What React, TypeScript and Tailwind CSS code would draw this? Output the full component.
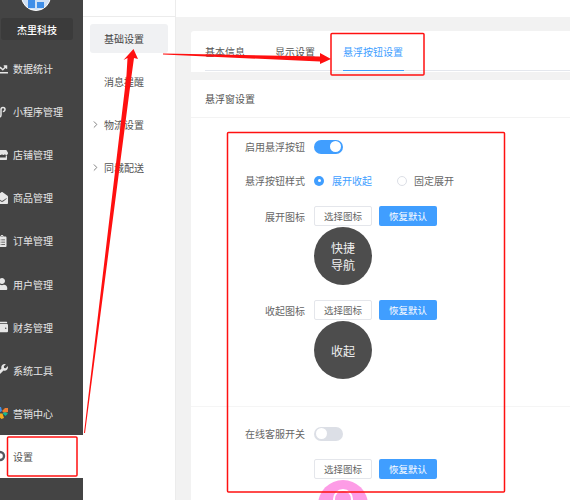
import type { ReactNode } from 'react';
import { FaChartLine, FaClipboardList, FaEnvelopeOpen, FaStore, FaUser, FaWallet, FaWrench } from 'react-icons/fa';
import { LuChevronRight } from 'react-icons/lu';

const FONT = 'font-["Noto_Sans_CJK_SC","Liberation_Sans",sans-serif]';

function MiniAppIcon() {
  return (
    <svg viewBox="0 0 12 12" className="h-3 w-3" fill="none" stroke="currentColor" strokeWidth="1.5">
      <path d="M1 7.5v1.5a2 2 0 0 0 4 0V3.5a2 2 0 0 1 4 0a2 2 0 0 1-2.2 2" />
    </svg>
  );
}

function MarketingIcon() {
  return (
    <svg viewBox="0 0 12 12" className="h-3 w-3">
      <path d="M0 0h5l1 4-3 2z" fill="#3f8ee8" />
      <path d="M12 1v4L8 6 6 4l3-3z" fill="#ee7d31" />
      <path d="M6.5 6.5 9 5l3 1.5L9.5 9z" fill="#17b890" />
      <path d="M3 6.5h3.5L8 11l-2.5 1L3 10z" fill="#f5ac1c" />
    </svg>
  );
}

function GearIcon() {
  return (
    <svg viewBox="0 0 12 12" className="h-3 w-3">
      <circle cx="6" cy="6" r="4" fill="none" stroke="#55585e" strokeWidth="2.4" />
    </svg>
  );
}

const MENU: Array<{ label: string; icon: ReactNode }> = [
  { label: '数据统计', icon: <FaChartLine size={12} /> },
  { label: '小程序管理', icon: <MiniAppIcon /> },
  { label: '店铺管理', icon: <FaStore size={12} /> },
  { label: '商品管理', icon: <FaEnvelopeOpen size={12} /> },
  { label: '订单管理', icon: <FaClipboardList size={12} /> },
  { label: '用户管理', icon: <FaUser size={12} /> },
  { label: '财务管理', icon: <FaWallet size={12} /> },
  { label: '系统工具', icon: <FaWrench size={12} /> },
  { label: '营销中心', icon: <MarketingIcon /> },
];

const SUB_MENU = [
  { label: '消息提醒', arrow: false },
  { label: '物流设置', arrow: true },
  { label: '同城配送', arrow: true },
];

function Sidebar() {
  return (
    <aside className="flex w-[83px] shrink-0 flex-col bg-[#444444]">
      <div className="h-[18px] overflow-hidden">
        <div className="-mt-[19px] ml-[21px] flex h-[30px] w-[30px] items-end justify-center gap-[2px] rounded-full border border-white bg-[#cfe0f5] pb-[2px]">
          <div className="h-[9px] w-[7px] bg-[#3f8ee8]" />
          <div className="h-[6px] w-[7px] bg-[#3f8ee8]" />
        </div>
      </div>
      <div className="ml-[1px] flex h-[22px] w-[72px] items-center justify-center rounded-[3px] bg-[#3b3b3b] text-[10px] font-medium text-white">
        杰里科技
      </div>
      <nav className="mt-[7px] flex flex-col">
        {MENU.map((item) => (
          <div key={item.label} className="flex h-[43.1px] items-center text-[10px] text-[#e6e6e6]">
            <span className="-ml-[4px] mr-[5px] flex w-[12px] justify-center">{item.icon}</span>
            {item.label}
          </div>
        ))}
        <div className="flex h-[43px] items-center bg-white text-[10px] text-[#555555]">
          <span className="-ml-[6px] mr-[7px] flex w-[12px] justify-center">
            <GearIcon />
          </span>
          设置
        </div>
      </nav>
    </aside>
  );
}

function SubMenu() {
  return (
    <div className="w-[93px] shrink-0 border-r border-[#ececec] bg-white">
      <div className="h-[17px] border-b border-[#ececec]" />
      <div className="mx-[7px] mt-[7px] flex h-[29px] items-center rounded-[3px] bg-[#f0f1f3] pl-[14px] text-[10px] text-[#444444]">
        基础设置
      </div>
      <div className="flex flex-col pt-[7px]">
        {SUB_MENU.map((item) => (
          <div key={item.label} className="relative flex h-[43px] items-center pl-[21px] text-[10px] text-[#555555]">
            {item.arrow && <LuChevronRight size={11} className="absolute left-[7px] text-[#777777]" />}
            {item.label}
          </div>
        ))}
      </div>
    </div>
  );
}

function Switch({ on }: { on: boolean }) {
  return (
    <div
      className={`flex h-[14px] w-[29px] items-center rounded-full px-[2px] ${
        on ? 'justify-end bg-[#409eff]' : 'justify-start bg-[#dcdfe6]'
      }`}
    >
      <div className="h-[11px] w-[11px] rounded-full bg-white" />
    </div>
  );
}

function Field({ label, children }: { label?: string; children: ReactNode }) {
  return (
    <div className="flex items-center">
      <div className="w-[123px] shrink-0 pr-[9px] text-right text-[10px] text-[#666666]">{label}</div>
      {children}
    </div>
  );
}

function IconButtons({ label }: { label?: string }) {
  return (
    <Field label={label}>
      <div className="flex gap-[7px]">
        <div className="flex h-[20px] w-[58px] items-center justify-center rounded-[2px] border border-[#e4e6eb] bg-white text-[9.5px] text-[#666666]">
          选择图标
        </div>
        <div className="flex h-[20px] w-[58px] items-center justify-center rounded-[2px] bg-[#409eff] text-[9.5px] text-white">
          恢复默认
        </div>
      </div>
    </Field>
  );
}

function Bubble({ lines }: { lines: string[] }) {
  return (
    <div className="ml-[123px] flex h-[58px] w-[58px] flex-col items-center justify-center rounded-full bg-[#4d4d4d] text-[12px] leading-[17px] text-[#f0f0f0]">
      {lines.map((line) => (
        <span key={line}>{line}</span>
      ))}
    </div>
  );
}

function Annotations() {
  return (
    <svg viewBox="0 0 570 500" className="pointer-events-none absolute inset-0 h-[500px] w-[570px]">
      <g fill="none" stroke="#ff1010" strokeWidth="1.5">
        <rect x="7.5" y="437" width="69.5" height="39" rx="1" />
        <rect x="331" y="33.5" width="93" height="41.5" rx="1" />
        <rect x="227.5" y="132.5" width="277" height="359.5" rx="1" />
      </g>
      <path d="M84 433 L126.5 75 L127.5 58 L123.5 60 L133.5 49 L138 59 L134 58 L131.5 76 L85 433 Z" fill="#ff1010" />
      <path d="M163 53.5 L320 56.5 L320 53 L331 59 L320 64 L320 61.5 L163 54.5 Z" fill="#ff1010" />
    </svg>
  );
}

export default function App() {
  return (
    <div className={`relative flex h-[500px] w-[570px] overflow-hidden bg-[#f2f2f2] ${FONT}`}>
      <Sidebar />
      <SubMenu />
      <main className="min-w-0 flex-1">
        <div className="h-[17px] bg-white" />
        <div className="ml-[15px] mt-[14px] h-[41px] rounded-tl-[3px] bg-white pl-[14px]">
          <div className="flex h-[39.5px] items-start gap-[30px] border-b border-[#e4e7ed] pt-[14px] text-[10px] leading-[14px] text-[#555555]">
            <span>基本信息</span>
            <span>显示设置</span>
            <span className="-mb-px -ml-[2px] h-[25.5px] w-[61px] border-b border-[#409eff] text-[#409eff]">悬浮按钮设置</span>
          </div>
        </div>
        <div className="ml-[15px] mt-[8px] h-[420px] bg-white">
          <div className="flex h-[38px] items-center border-b border-[#f3f3f3] pl-[14px] text-[10px] text-[#555555]">
            悬浮窗设置
          </div>
          <div className="flex flex-col pt-[21px]">
            <Field label="启用悬浮按钮">
              <Switch on />
            </Field>
            <div className="mt-[19px]">
              <Field label="悬浮按钮样式">
                <div className="flex items-center text-[10px]">
                  <span className="flex h-[10px] w-[10px] items-center justify-center rounded-full bg-[#409eff]">
                    <span className="h-[3px] w-[3px] rounded-full bg-white" />
                  </span>
                  <span className="ml-[8px] text-[#409eff]">展开收起</span>
                  <span className="ml-[25px] h-[10px] w-[10px] rounded-full border border-[#dcdfe6]" />
                  <span className="ml-[7px] text-[#666666]">固定展开</span>
                </div>
              </Field>
            </div>
            <div className="mt-[18px]">
              <IconButtons label="展开图标" />
            </div>
            <div className="mt-px">
              <Bubble lines={['快捷', '导航']} />
            </div>
            <div className="mt-[15px]">
              <IconButtons label="收起图标" />
            </div>
            <div className="mt-px">
              <Bubble lines={['收起']} />
            </div>
            <div className="mt-[27px] border-t border-[#f5f5f5] pt-[19px]">
              <Field label="在线客服开关">
                <Switch on={false} />
              </Field>
            </div>
            <div className="mt-[18px]">
              <IconButtons />
            </div>
            <div className="ml-[127px] mt-px flex h-[50px] w-[50px] items-start justify-center rounded-full bg-[#fd9ce6] pt-[9px]">
              <div className="h-[16px] w-[20px] rounded-t-full border-2 border-white" />
            </div>
          </div>
        </div>
      </main>
      <Annotations />
    </div>
  );
}
